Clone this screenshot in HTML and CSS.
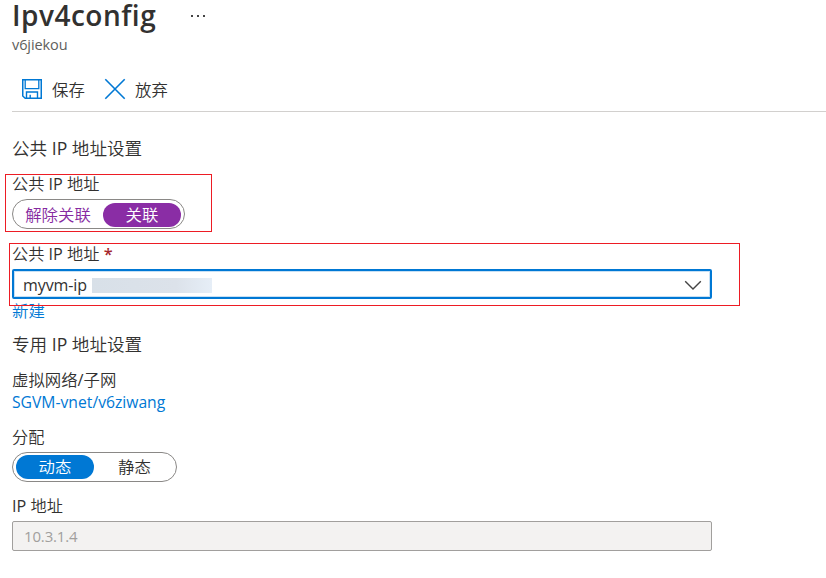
FILE: index.html
```
<!DOCTYPE html>
<html lang="zh-CN">
<head>
<meta charset="utf-8">
<title>Ipv4config</title>
<link rel="stylesheet" href="styles.css">
</head>
<body>
<header class="header">
  <div class="title-row">
    <h1 class="title">Ipv4config</h1>
    <svg class="more" width="16" height="4" viewBox="0 0 16 4"><path d="M1 1h2v2H1zM7 1h2v2H7zM13 1h2v2h-2z" fill="#444"/></svg>
  </div>
  <div class="subtitle">v6jiekou</div>
</header>
<div class="toolbar">
  <button class="tool">
    <svg width="22" height="22" viewBox="0 0 22 22" fill="none" stroke="#0078d4" stroke-width="1.5"><path d="M1.75 1.75h18.5v18.5H4.2L1.75 18z"/><path d="M4.2 2v8.7h13.6V2" stroke-width="1.3"/><path d="M5.5 20v-6h11v6M9.2 20v-3.2" stroke-width="1.4"/></svg>
    <span>保存</span>
  </button>
  <button class="tool">
    <svg width="22" height="22" viewBox="0 0 22 22" fill="none" stroke="#0078d4" stroke-width="1.6"><path d="M1.3 1.3l19.4 19.4M20.7 1.3L1.3 20.7"/></svg>
    <span>放弃</span>
  </button>
</div>
<main class="form">
  <h2 class="heading">公共 IP 地址设置</h2>
  <section class="group public-mode">
    <div class="label">公共 IP 地址</div>
    <div class="toggle purple">
      <span class="option wide">解除关联</span><span class="option selected">关联</span>
    </div>
    <div class="mark mark-mode"></div>
  </section>
  <section class="group public-address">
    <div class="label">公共 IP 地址 <span class="required">*</span></div>
    <div class="select">
      <span class="value">myvm-ip</span><span class="masked"></span>
      <svg class="chevron" width="18" height="11" viewBox="0 0 18 11" fill="none" stroke="#444" stroke-width="1.4"><path d="M1.2 1.2L9 9l7.8-7.8"/></svg>
    </div>
    <a class="link create">新建</a>
    <div class="mark mark-address"></div>
  </section>
  <h2 class="heading private">专用 IP 地址设置</h2>
  <div class="label network">虚拟网络/子网</div>
  <a class="link subnet">SGVM-vnet/v6ziwang</a>
  <div class="label assign">分配</div>
  <div class="toggle blue">
    <span class="option selected">动态</span><span class="option">静态</span>
  </div>
  <div class="label address">IP 地址</div>
  <div class="input">10.3.1.4</div>
</main>
</body>
</html>
```
FILE: styles.css
```
* { box-sizing: border-box; }
body {
  margin: 0;
  height: 578px;
  overflow: hidden;
  background: #fff;
  color: #323130;
  font: 16px/22px "Open Sans", "Noto Sans CJK SC DemiLight", "Noto Sans CJK SC", sans-serif;
}
h1, h2 { margin: 0; }
.header { padding-left: 12px; height: 56px; }
.title-row { display: flex; height: 34px; }
.title { width: 177px; font-size: 28px; line-height: 30px; font-weight: 600; letter-spacing: 0.5px; }
.more { margin: 14px 0 0 1px; }
.subtitle { font-size: 14.5px; letter-spacing: -0.1px; color: #605e5c; }
.toolbar {
  display: flex;
  align-items: flex-start;
  height: 56px;
  margin-left: 12px;
  padding: 22px 0 0 9px;
  border-bottom: 1px solid #d2d0ce;
}
.tool {
  display: flex;
  align-items: center;
  gap: 9px;
  width: 83px;
  height: 22px;
  padding: 0;
  border: 0;
  background: none;
  color: inherit;
  font: inherit;
}
.tool span { padding-top: 2px; font-size: 16.4px; }
.form { padding: 24px 12px 0; }
.heading { height: 24px; font-size: 17.6px; line-height: 24px; font-weight: 400; }
.group { position: relative; width: 700px; }
.label { height: 22px; font-size: 16.2px; line-height: 21px; }
.public-mode { margin-top: 14px; }
.toggle {
  display: flex;
  width: 173px;
  height: 30px;
  padding: 3px;
  border: 1px solid #8a8886;
  border-radius: 15px;
}
.option { width: 78px; height: 24px; border-radius: 12px; line-height: 24px; text-align: center; font-size: 16.4px; }
.option.wide { width: 87px; padding-right: 3px; }
.public-mode .toggle { margin-top: 3px; }
.purple { color: #862aa1; }
.purple .selected { background: #8a2da5; color: #fff; }
.blue { width: 165px; margin-top: 3px; padding-top: 2px; }
.blue .selected { background: #0078d4; color: #fff; }
.blue .option:last-child { padding-left: 3px; }
.public-address { margin-top: 15px; }
.required { color: #a4262c; font-weight: 600; }
.select {
  display: flex;
  align-items: center;
  height: 30px;
  margin-top: 3px;
  padding: 2px 8px 0 9px;
  border: 2px solid #0078d4;
  border-radius: 2px;
  box-shadow: inset 0 0 0 1px #c7e0f4;
}
.value { width: 69px; letter-spacing: -0.1px; }
.masked { width: 120px; height: 15px; background: linear-gradient(90deg, #d8e0e8, #dce2ea 70%, #e6eef7); }
.chevron { margin-left: auto; }
.link { display: block; height: 22px; color: #0078d4; }
.create { margin-top: 1px; font-size: 16.4px; line-height: 21px; }
.mark { position: absolute; border: 1px solid #ed1c24; pointer-events: none; }
.mark-mode { left: -7px; top: 0; width: 207px; height: 58px; }
.mark-address { left: -3px; top: -1px; width: 731px; height: 63px; }
.private { margin-top: 10px; }
.network { margin-top: 13px; font-size: 16.4px; line-height: 22px; }
.subnet { font-size: 15.7px; line-height: 23px; }
.assign { margin-top: 14px; }
.address { margin-top: 14px; }
.input {
  width: 700px;
  height: 30px;
  margin-top: 3px;
  padding-left: 11px;
  border: 1px solid #a19f9d;
  border-radius: 2px;
  background: #f3f2f1;
  color: #a19f9d;
  font-size: 15px;
  letter-spacing: -0.15px;
  line-height: 29px;
}
```
